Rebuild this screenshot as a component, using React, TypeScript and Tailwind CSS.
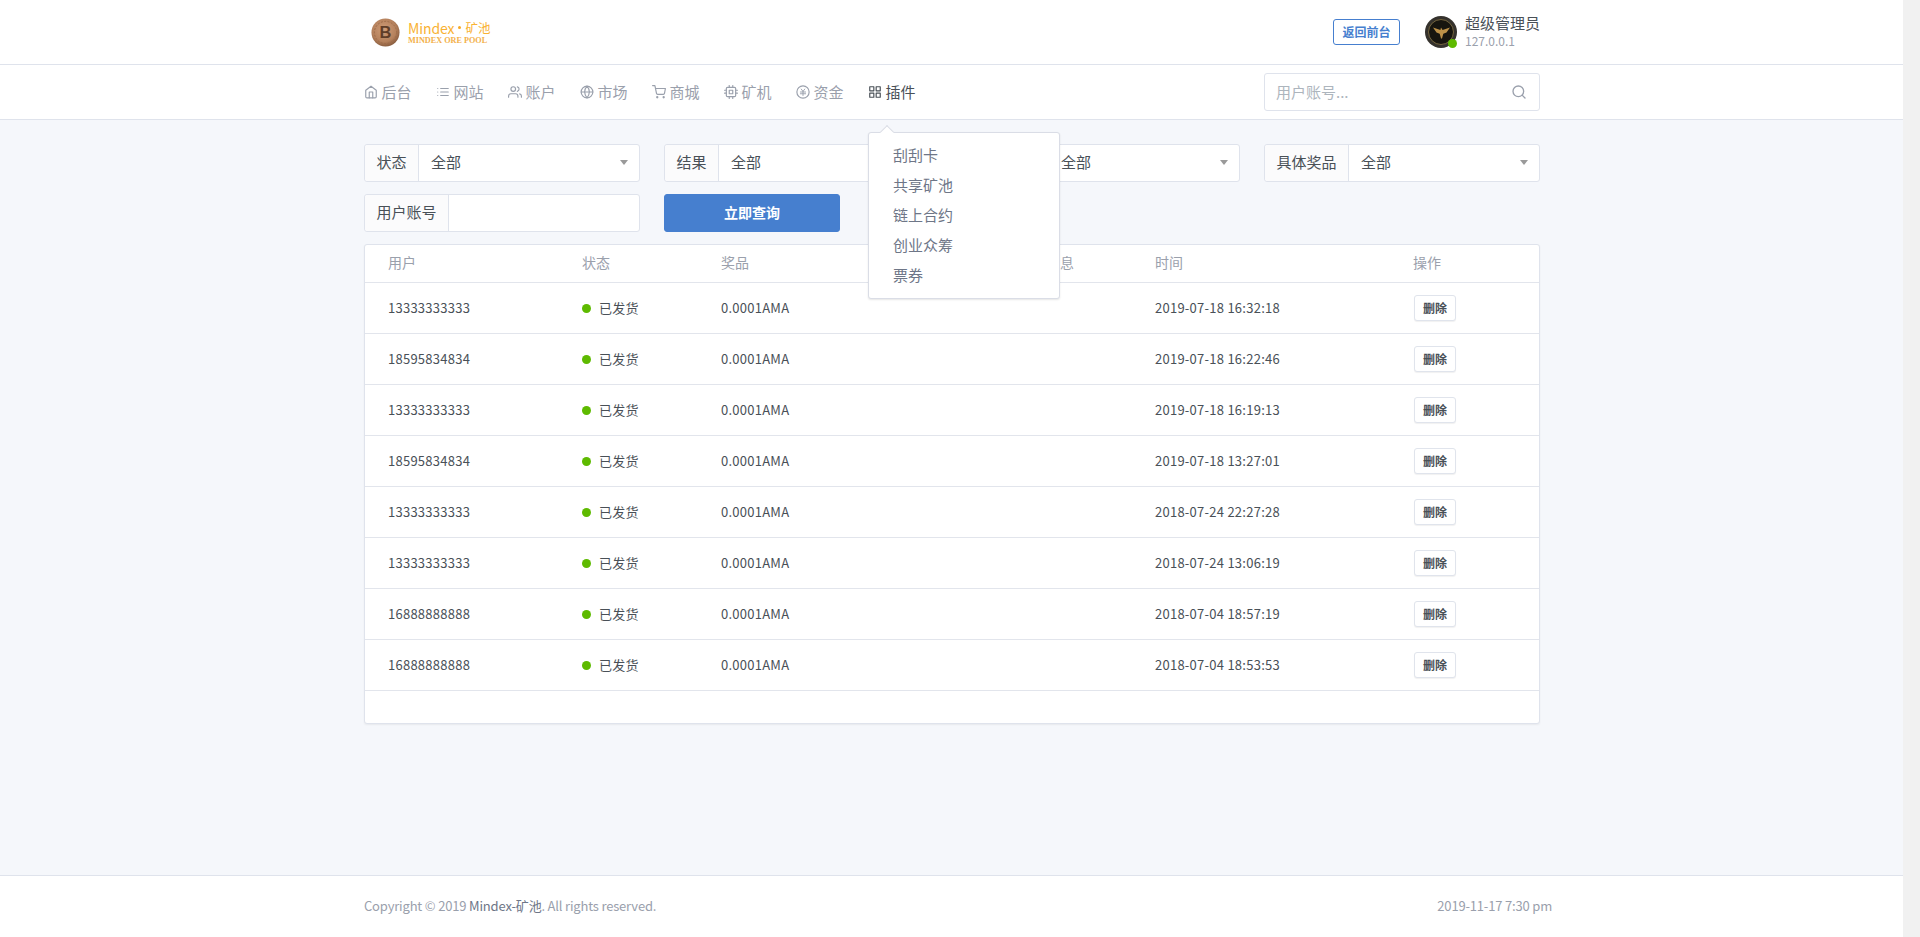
import React from "react";
import { FiHome, FiList, FiUsers, FiGlobe, FiShoppingCart, FiCpu, FiGrid, FiSearch } from "react-icons/fi";

const FONT = "font-['Noto_Sans_CJK_SC','Noto_Sans',sans-serif]";

function MoneyIcon({ className }: { className?: string }) {
  return (
    <svg viewBox="0 0 24 24" fill="none" stroke="currentColor" strokeWidth="2" strokeLinecap="round" strokeLinejoin="round" className={className}>
      <circle cx="12" cy="12" r="10.5" />
      <path strokeWidth="1.6" d="M9 7l3 4 3-4M7.5 12h9M7.5 15h9M12 11v7" />
    </svg>
  );
}

const navItems = [
  { label: "后台", Icon: FiHome },
  { label: "网站", Icon: FiList },
  { label: "账户", Icon: FiUsers },
  { label: "市场", Icon: FiGlobe },
  { label: "商城", Icon: FiShoppingCart },
  { label: "矿机", Icon: FiCpu },
  { label: "资金", Icon: MoneyIcon },
];

const rows = [
  ["13333333333", "2019-07-18 16:32:18"],
  ["18595834834", "2019-07-18 16:22:46"],
  ["13333333333", "2019-07-18 16:19:13"],
  ["18595834834", "2019-07-18 13:27:01"],
  ["13333333333", "2018-07-24 22:27:28"],
  ["13333333333", "2018-07-24 13:06:19"],
  ["16888888888", "2018-07-04 18:57:19"],
  ["16888888888", "2018-07-04 18:53:53"],
];

function Logo() {
  return (
    <div className="flex items-center ml-[7px]">
      <svg viewBox="0 0 30 30" className="w-[29px] h-[29px]">
        <defs>
          <radialGradient id="coin" cx="45%" cy="40%" r="65%">
            <stop offset="0%" stopColor="#cf9c78" />
            <stop offset="65%" stopColor="#b5815c" />
            <stop offset="100%" stopColor="#7f5438" />
          </radialGradient>
        </defs>
        <circle cx="15" cy="15" r="14.5" fill="url(#coin)" />
        <circle cx="15" cy="15" r="11.5" fill="none" stroke="#9c6a48" strokeWidth="1" strokeDasharray="2 1.5" />
        <text x="15" y="21" textAnchor="middle" fontSize="17" fontWeight="700" fill="#5f3d28" fontFamily="'Liberation Sans',sans-serif">B</text>
      </svg>
      <div className="ml-2 flex flex-col w-[82px]">
        <div className="flex items-center text-[#f9b233] leading-[14px] whitespace-nowrap">
          <span className="text-[14px] tracking-[-0.1px]">Mindex</span>
          <span className="w-[3px] h-[3px] rounded-full bg-[#f7a823] mx-[4px] shrink-0" />
          <span className="text-[12.5px]">矿池</span>
        </div>
        <div className="text-[#f3b04a] text-[8.2px] leading-[7px] mt-[2px] font-bold font-['Liberation_Serif',serif] whitespace-nowrap">MINDEX ORE POOL</div>
      </div>
    </div>
  );
}

function Avatar() {
  return (
    <div className="relative w-8 h-8 shrink-0">
      <svg viewBox="0 0 32 32" className="w-8 h-8">
        <circle cx="16" cy="16" r="16" fill="#35322d" />
        <circle cx="16" cy="16" r="12.5" fill="#17150f" stroke="#75653f" strokeWidth="1" />
        <path d="M16 11.5l1.6 2.6 7.4-2.6-3.5 5-3.2 1.3-1.3 4.7 -1 0-1.3-4.7-3.2-1.3-3.5-5 7.4 2.6z" fill="#bd9148" />
      </svg>
      <span className="absolute right-0 bottom-0 w-[9px] h-[9px] rounded-full bg-[#5eba00]" />
    </div>
  );
}

function Filter({ label, value, width, arrow = true }: { label: string; value?: string; width: string; arrow?: boolean }) {
  return (
    <div className="flex h-[38px] w-[276px] rounded-[3px] border border-[#dfe3ec] bg-white">
      <div className={`${width} shrink-0 flex items-center justify-center bg-[#fbfbfc] border-r border-[#dfe3ec] rounded-l-[3px] pb-[1px] text-[15px] text-[#495057]`}>{label}</div>
      <div className="flex-1 flex items-center justify-between pl-3 pr-[11px] pb-[1px] text-[15px] text-[#495057]">
        <span>{value}</span>
        {arrow && <span className="w-0 h-0 border-l-[4px] border-r-[4px] border-t-[5px] border-l-transparent border-r-transparent border-t-[#9a9a9a]" />}
      </div>
    </div>
  );
}

function Row({ user, time }: { user: string; time: string }) {
  return (
    <div className="flex items-center h-[51px] border-t border-[#e2e5ec] text-[13px] tracking-[0.25px] text-[#495057]">
      <div className="w-[217px] pl-[23px]">{user}</div>
      <div className="w-[139px] flex items-center">
        <span className="w-[9px] h-[9px] rounded-full bg-[#5eba00] mr-[8px]" />
        已发货
      </div>
      <div className="w-[434px]">0.0001AMA</div>
      <div className="w-[259px]">{time}</div>
      <div>
        <button className="w-[42px] h-[26px] rounded-[3px] border border-[#e0e4ec] bg-white shadow-[0_1px_1px_rgba(0,0,0,0.06)] text-[12px] tracking-normal font-bold text-[#495057] flex items-center justify-center">删除</button>
      </div>
    </div>
  );
}

export default function App() {
  return (
    <div className={`flex w-full h-[937px] overflow-hidden ${FONT}`}>
      <div className="flex-1 min-w-0 flex flex-col bg-[#f5f7fb]">
        <header className="bg-white border-b border-[#dfe3ec] h-[65px] shrink-0">
          <div className="w-[1176px] ml-[364px] h-full flex items-center justify-between">
            <Logo />
            <div className="flex items-center">
              <a className="w-[67px] h-[26px] rounded-[3px] border border-[#467fcf] text-[#467fcf] text-[12px] font-bold flex items-center justify-center mr-[25px]">返回前台</a>
              <Avatar />
              <div className="ml-[8px] flex flex-col">
                <span className="text-[15px] leading-[18px] text-[#495057]">超级管理员</span>
                <span className="text-[12px] leading-[18px] text-[#9aa0ac]">127.0.0.1</span>
              </div>
            </div>
          </div>
        </header>

        <nav className="bg-white border-b border-[#dfe3ec] h-[55px] shrink-0">
          <div className="w-[1176px] ml-[364px] h-full flex items-center justify-between">
            <div className="flex items-center h-full">
              {navItems.map(({ label, Icon }) => (
                <div key={label} className="flex items-center w-[72px] text-[15px] text-[#9aa0ac]">
                  <Icon className="w-[14px] h-[14px] mr-[3.5px] shrink-0" />
                  <span>{label}</span>
                </div>
              ))}
              <div className="relative flex items-center h-full text-[15px] text-[#495057]">
                <FiGrid className="w-[14px] h-[14px] mr-[3.5px] shrink-0" />
                <span>插件</span>
                <div className="absolute left-0 top-[67px] w-[192px] h-[167px] z-10 bg-white border border-[#dadde6] rounded-[3px] shadow-[0_1px_2px_rgba(0,0,0,0.1)] py-[7px] text-[15px] text-[#6e7687]">
                  <span className="absolute -top-[6px] left-[13px] w-[10px] h-[10px] rotate-45 bg-white border-l border-t border-[#dadde6]" />
                  {["刮刮卡", "共享矿池", "链上合约", "创业众筹", "票券"].map((t) => (
                    <div key={t} className="h-[30px] leading-[30px] pl-[24px]">{t}</div>
                  ))}
                </div>
              </div>
            </div>
            <div className="w-[276px] h-[38px] rounded-[3px] border border-[#dfe3ec] bg-white flex items-center justify-between pl-[11px] pr-[12px]">
              <span className="text-[15px] text-[#adb5bd]">用户账号...</span>
              <FiSearch className="w-[16px] h-[16px] text-[#9aa0ac]" />
            </div>
          </div>
        </nav>

        <main className="flex-1 min-h-0">
          <div className="w-[1176px] ml-[364px] pt-[24px]">
            <div className="grid grid-cols-[276px_276px_276px_276px] gap-x-[24px] gap-y-[12px]">
              <Filter label="状态" value="全部" width="w-[54px]" />
              <Filter label="结果" value="全部" width="w-[54px]" />
              <Filter label="奖品类型" value="全部" width="w-[84px]" />
              <Filter label="具体奖品" value="全部" width="w-[84px]" />
              <Filter label="用户账号" width="w-[84px]" arrow={false} />
              <button className="w-[176px] h-[38px] rounded-[3px] bg-[#467fcf] border border-[#467fcf] pb-[1px] text-white text-[14px] font-bold flex items-center justify-center">立即查询</button>
            </div>

            <div className="mt-[12px] bg-white border border-[#dfe3ec] rounded-[3px] shadow-[0_1px_2px_rgba(0,0,0,0.06)]">
              <div className="flex items-center h-[37px] pb-[2px] text-[14px] text-[#9aa0ac]">
                <div className="w-[217px] pl-[23px]">用户</div>
                <div className="w-[139px]">状态</div>
                <div className="w-[325px]">奖品</div>
                <div className="w-[109px]">信息</div>
                <div className="w-[258px]">时间</div>
                <div>操作</div>
              </div>
              {rows.map(([u, t], i) => (
                <Row key={i} user={u} time={t} />
              ))}
              <div className="h-[33px] border-t border-[#e2e5ec]" />
            </div>
          </div>
        </main>

        <footer className="bg-white border-t border-[#dfe3ec] h-[62px] shrink-0">
          <div className="w-[1188px] ml-[364px] h-full pb-[1px] flex items-center justify-between text-[13px] tracking-[-0.18px] text-[#9aa0ac]">
            <div>Copyright © 2019 <span className="text-[#6e7687]">Mindex-矿池</span>. All rights reserved.</div>
            <div>2019-11-17 7:30 pm</div>
          </div>
        </footer>
      </div>
      <div className="w-[17px] shrink-0 bg-[#f1f1f1]" />
    </div>
  );
}
